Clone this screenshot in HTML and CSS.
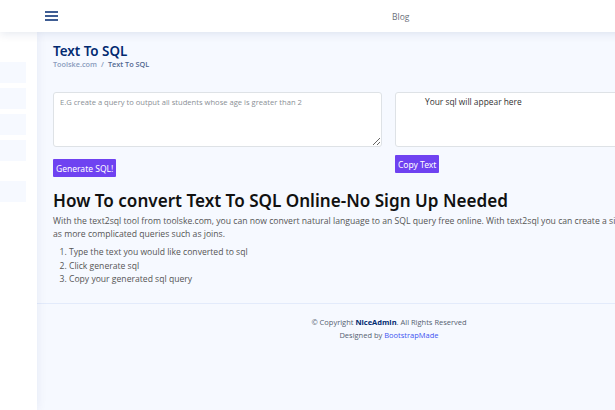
FILE: index.html
```html
<!DOCTYPE html>
<html>
<head>
<meta charset="utf-8">
<link rel="stylesheet" href="styles.css">
</head>
<body>
<header class="header">
  <svg class="burger" width="13" height="10" viewBox="0 0 13 10"><path d="M0 1h13M0 5h13M0 9h13" stroke="#012970" stroke-width="1.3"/></svg>
  <nav class="topnav"><a>Blog</a></nav>
</header>
<div class="layout">
  <aside class="sidebar">
    <div class="sitem"></div>
    <div class="sitem"></div>
    <div class="sitem"></div>
    <div class="sitem"></div>
    <div class="sitem gap"></div>
  </aside>
  <div class="content">
    <main class="main">
      <div class="pagetitle">
        <h1>Text To SQL</h1>
        <div class="crumbs"><span class="home">Toolske.com</span><span class="sep">/</span><span class="cur">Text To SQL</span></div>
      </div>
      <div class="cols">
        <div class="col">
          <textarea class="box" placeholder="E.G create a query to output all students whose age is greater than 2"></textarea>
          <button class="btn gen">Generate SQL!</button>
        </div>
        <div class="col">
          <div class="box out">Your sql will appear here</div>
          <button class="btn copy">Copy Text</button>
        </div>
      </div>
      <h2 class="howto">How To convert Text To SQL Online-No Sign Up Needed</h2>
      <p class="desc">With the text2sql tool from toolske.com, you can now convert natural language to an SQL query free online. With text2sql you can create a simple queries as well<br>as more complicated queries such as joins.</p>
      <ol class="steps">
        <li>Type the text you would like converted to sql</li>
        <li>Click generate sql</li>
        <li>Copy your generated sql query</li>
      </ol>
    </main>
    <footer class="footer">
      <div>© Copyright <strong>NiceAdmin</strong>. All Rights Reserved</div>
      <div class="credits">Designed by <a>BootstrapMade</a></div>
    </footer>
  </div>
</div>
</body>
</html>
```
FILE: styles.css
```css
html, body {
  margin: 0;
  padding: 0;
}
body {
  width: 615px;
  height: 410px;
  overflow: hidden;
  background: #f6f9ff;
  font-family: "Open Sans", "Noto Sans", sans-serif;
  color: #444444;
}
.header {
  height: 32px;
  background: #ffffff;
  box-shadow: 0 2px 10px rgba(1, 41, 112, 0.1);
  display: flex;
  align-items: center;
  position: relative;
  z-index: 2;
  width: 741px;
}
.burger {
  margin-left: 45px;
}
.topnav {
  margin-left: 334px;
  font-size: 8.5px;
  color: #6a6f7a;
}
.layout {
  display: flex;
  width: 741px;
  min-height: 378px;
}
.sidebar {
  width: 37px;
  flex-shrink: 0;
  background: #ffffff;
  box-shadow: 0 0 10px rgba(1, 41, 112, 0.08);
  padding-top: 30px;
  box-sizing: border-box;
  z-index: 1;
}
.sitem {
  width: 26px;
  height: 21px;
  background: #f6f9ff;
  margin-bottom: 5px;
}
.sitem.gap {
  margin-top: 20px;
}
.content {
  width: 704px;
  flex-shrink: 0;
}
.main {
  padding: 10px 16px 16px 16px;
}
.pagetitle h1 {
  margin: 0;
  font-family: "Noto Sans", "Open Sans", sans-serif;
  font-size: 13.4px;
  font-weight: 600;
  color: #012970;
  line-height: 18px;
}
.crumbs {
  font-size: 7.3px;
  color: #899bbd;
  margin-top: -1px;
  line-height: 10px;
  font-weight: 600;
}
.crumbs .sep {
  margin: 0 4px;
}
.crumbs .cur {
  color: #51678f;
}
.cols {
  display: flex;
  gap: 13px;
  margin-top: 23px;
}
.col {
  width: 329px;
  flex-shrink: 0;
}
.box {
  display: block;
  width: 329px;
  height: 55px;
  box-sizing: border-box;
  border: 1px solid #dee2e6;
  border-radius: 3px;
  background: #ffffff;
  font-family: "Open Sans", sans-serif;
  font-size: 7.6px;
  padding: 4px 6px;
  margin: 0;
  resize: vertical;
}
.box::placeholder {
  color: #8a8f96;
}
.out {
  padding: 3px 6px 4px 29px;
  font-size: 8.4px;
  color: #333;
}
.btn {
  background: #6f42f1;
  color: #ffffff;
  border: none;
  border-radius: 1px;
  font-family: "Noto Sans", "Open Sans", sans-serif;
  font-size: 8.5px;
  padding: 0 3px;
  height: 18px;
  margin-top: 12px;
}
.copy {
  margin-top: 8px;
}
.howto {
  margin: 13px 0 0 0;
  font-family: "Noto Sans", "Open Sans", sans-serif;
  font-weight: 600;
  font-size: 17.1px;
  color: #111111;
  line-height: 22px;
}
.desc {
  margin: 3px 0 0 0;
  font-size: 8.65px;
  line-height: 13px;
  color: #555555;
  white-space: nowrap;
}
.steps {
  margin: 5px 0 0 0;
  padding-left: 16px;
  font-size: 8.6px;
  line-height: 13.5px;
  color: #555555;
}
.footer {
  border-top: 1px solid #e3ebfb;
  padding-top: 12px;
  text-align: center;
  font-size: 7.5px;
  line-height: 13px;
  color: #555f70;
}
.footer strong {
  color: #012970;
}
.footer a {
  color: #4154f1;
}
```
